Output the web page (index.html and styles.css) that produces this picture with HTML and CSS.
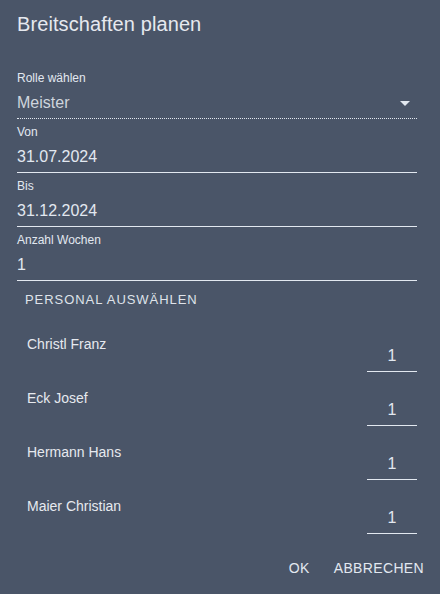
FILE: index.html
```html
<!DOCTYPE html>
<html>
<head>
  <title>Breitschaften planen</title>
  <link rel="stylesheet" href="styles.css">
</head>
<body>
  <div class="dialog">
    <h2 class="dialog-title">Breitschaften planen</h2>

    <div class="field">
      <label class="field-label">Rolle wählen</label>
      <div class="field-select">
        <span>Meister</span>
        <span class="select-arrow"></span>
      </div>
    </div>

    <div class="field">
      <label class="field-label" for="von">Von</label>
      <input class="field-input" type="text" id="von" value="31.07.2024">
    </div>

    <div class="field">
      <label class="field-label" for="bis">Bis</label>
      <input class="field-input" type="text" id="bis" value="31.12.2024">
    </div>

    <div class="field">
      <label class="field-label" for="wochen">Anzahl Wochen</label>
      <input class="field-input" type="text" id="wochen" value="1">
    </div>

    <div class="section-title">Personal auswählen</div>

    <div class="person-list">
      <div class="person-row">
        <span class="person-name">Christl Franz</span>
        <input class="person-count" type="text" value="1">
      </div>
      <div class="person-row">
        <span class="person-name">Eck Josef</span>
        <input class="person-count" type="text" value="1">
      </div>
      <div class="person-row">
        <span class="person-name">Hermann Hans</span>
        <input class="person-count" type="text" value="1">
      </div>
      <div class="person-row">
        <span class="person-name">Maier Christian</span>
        <input class="person-count" type="text" value="1">
      </div>
    </div>

    <div class="dialog-actions">
      <button class="action-btn">OK</button>
      <button class="action-btn">Abbrechen</button>
    </div>
  </div>
</body>
</html>
```

FILE: styles.css
```css
body {
  margin: 0;
  background-color: #4a5568;
  color: #e2e8f0;
  font-family: 'Liberation Sans', Arial, sans-serif;
}

.dialog {
  padding: 12px 23px 0 17px;
}

.dialog-title {
  margin: 0 0 35px;
  font-size: 20px;
  line-height: 24px;
  font-weight: normal;
  letter-spacing: 0.1px;
  color: #e6e9ef;
}

.field {
  margin-bottom: 6px;
}

.field-label {
  display: block;
  font-size: 12px;
  line-height: 14px;
  color: #e2e8f0;
}

.field-input,
.field-select {
  display: block;
  box-sizing: content-box;
  width: 100%;
  margin: 6px 0 0;
  padding: 0 0 3px;
  height: 24px;
  border: none;
  border-bottom: 1px solid #e2e8f0;
  background: transparent;
  color: #e2e8f0;
  font-family: inherit;
  font-size: 16px;
  line-height: 24px;
  outline: none;
}

.field-select {
  display: flex;
  align-items: center;
  justify-content: space-between;
  border-bottom-style: dotted;
  color: #cfd5de;
}

.select-arrow {
  width: 0;
  height: 0;
  margin-right: 7px;
  border-left: 5px solid transparent;
  border-right: 5px solid transparent;
  border-top: 5px solid #e2e8f0;
}

.section-title {
  margin: 11px 0 26px 8px;
  font-size: 13px;
  line-height: 16px;
  letter-spacing: 0.95px;
  text-transform: uppercase;
  color: #dfe3ea;
}

.person-list {
  display: flex;
  flex-direction: column;
  gap: 16px;
  padding-left: 10px;
}

.person-row {
  display: flex;
  justify-content: space-between;
  align-items: flex-start;
}

.person-name {
  font-size: 14px;
  line-height: 20px;
  color: #e6e9ef;
}

.person-count {
  width: 50px;
  height: 24px;
  margin-top: 10px;
  padding: 0 0 3px;
  border: none;
  border-bottom: 1px solid #e2e8f0;
  background: transparent;
  color: #e2e8f0;
  font-family: inherit;
  font-size: 16px;
  line-height: 24px;
  text-align: center;
  outline: none;
}

.dialog-actions {
  display: flex;
  justify-content: flex-end;
  gap: 8px;
  margin: 16px -15px 0 0;
}

.action-btn {
  padding: 0 8px;
  height: 36px;
  border: none;
  background: transparent;
  color: #e2e8f0;
  font-family: inherit;
  font-size: 14px;
  letter-spacing: 0.35px;
  text-transform: uppercase;
  cursor: pointer;
}
```
